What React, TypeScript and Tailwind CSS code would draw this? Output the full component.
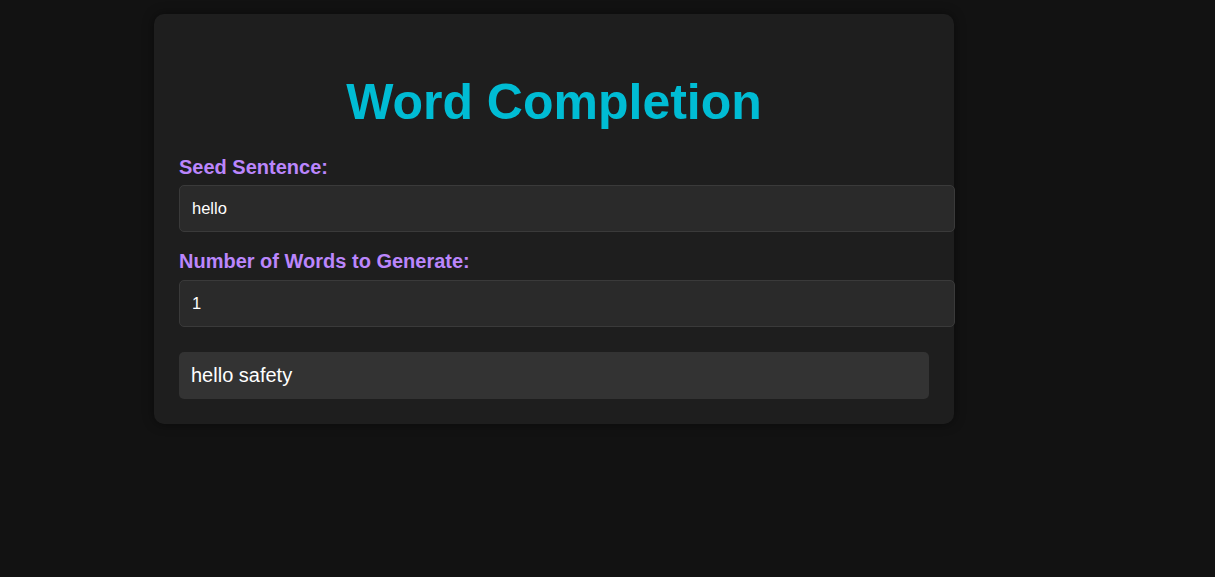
import { useState } from 'react';

export default function App() {
  const [seed, setSeed] = useState('hello');
  const [count, setCount] = useState('1');

  // Resultado fijo de ejemplo para la frase semilla
  const resultado = 'hello safety';

  return (
    <div className="min-h-[577px] bg-[#121212] pt-[14px] font-['Liberation_Sans',Arial,sans-serif]">
      <div className="ml-[154px] w-[800px] rounded-[10px] bg-[#1e1e1e] px-[25px] pt-[25px] pb-[25px] shadow-[0_0_12px_rgba(0,0,0,0.45)]">
        <h1 className="mt-[34px] text-center text-[50px] font-bold leading-[58px] text-[#00bcd4]">
          Word Completion
        </h1>

        <label className="mt-[25px] block text-[20px] font-bold leading-[23px] text-[#bb86fc]">
          Seed Sentence:
        </label>
        <input
          type="text"
          value={seed}
          onChange={(e) => setSeed(e.target.value)}
          className="mt-[6px] box-content block h-[21px] w-full rounded-[5px] border border-[#3a3a3a] bg-[#2a2a2a] px-[12px] py-[12px] text-[16.5px] text-white outline-none"
        />

        <label className="mt-[18px] block text-[20px] font-bold leading-[23px] text-[#bb86fc]">
          Number of Words to Generate:
        </label>
        <input
          type="number"
          value={count}
          onChange={(e) => setCount(e.target.value)}
          className="mt-[7px] box-content block h-[21px] w-full appearance-none rounded-[5px] border border-[#3a3a3a] bg-[#2a2a2a] px-[12px] py-[12px] text-[16.5px] text-white outline-none [&::-webkit-inner-spin-button]:appearance-none"
        />

        <div className="mt-[25px] rounded-[5px] bg-[#333333] px-[12px] py-[12px] text-[20px] leading-[23px] text-white">
          {resultado}
        </div>
      </div>
    </div>
  );
}
